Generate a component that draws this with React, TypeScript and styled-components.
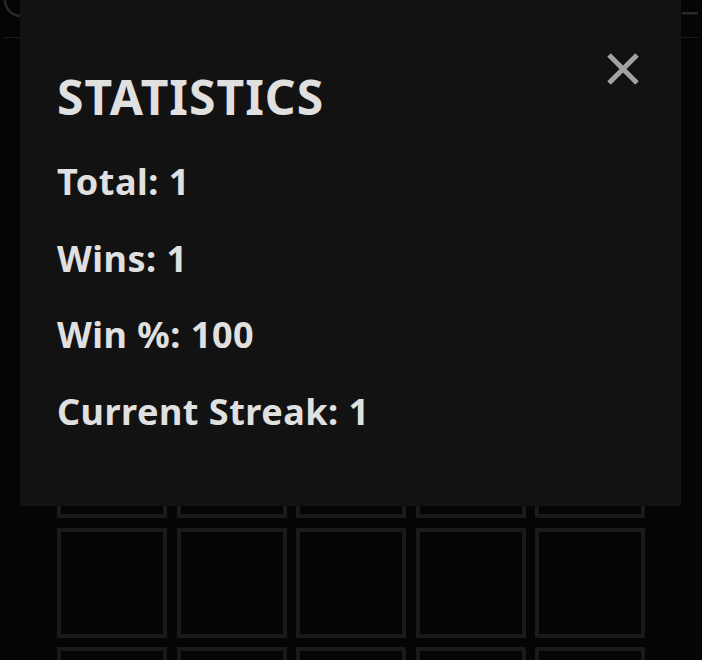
import React from "react";
import styled, { createGlobalStyle } from "styled-components";

const Global = createGlobalStyle`
  html, body { margin: 0; padding: 0; background: #121212; }
  body { font-family: "Noto Sans", "Open Sans", sans-serif; overflow: hidden; }
  #root { width: 702px; height: 660px; }
`;

const Page = styled.div`
  position: relative;
  width: 702px;
  height: 660px;
  background: #121212;
  overflow: hidden;
`;

const Header = styled.header`
  display: flex;
  justify-content: space-between;
  align-items: flex-start;
  height: 37px;
  margin: 0 3px;
  border-bottom: 1px solid #575757;
`;

const HeaderIcon = styled.svg`
  margin-top: -18px;
  color: #8a8a8a;
`;

const Board = styled.div`
  display: grid;
  grid-template-columns: repeat(5, 110px);
  grid-auto-rows: 110px;
  gap: 9.7px 9.5px;
  justify-content: center;
  padding-top: 11px;
`;

const Tile = styled.div`
  box-sizing: border-box;
  border: 4px solid #575757;
  background: #121212;
`;

const Overlay = styled.div`
  position: absolute;
  inset: 0;
  background: rgba(0, 0, 0, 0.7);
`;

const Modal = styled.section`
  position: absolute;
  top: 0;
  left: 20px;
  width: 661px;
  box-sizing: border-box;
  padding: 73px 37px 76px;
  background: #121212;
  color: #e0e0e0;
  display: flex;
  flex-direction: column;
`;

const Title = styled.h2`
  margin: 0 0 43px;
  font-size: 48px;
  line-height: 48px;
  font-weight: 700;
  letter-spacing: 1px;
`;

const StatList = styled.div`
  display: flex;
  flex-direction: column;
  gap: 40.5px;
`;

const Stat = styled.p`
  margin: 0;
  font-size: 36px;
  line-height: 36px;
  font-weight: 700;
  letter-spacing: 0.5px;
`;

const CloseButton = styled.button`
  position: absolute;
  top: 51px;
  right: 40px;
  width: 36px;
  height: 36px;
  padding: 0;
  border: none;
  background: transparent;
  color: #a2a2a2;
  display: flex;
  align-items: center;
  justify-content: center;
`;

const stats = [
  ["Total", "1"],
  ["Wins", "1"],
  ["Win %", "100"],
  ["Current Streak", "1"],
];

export default function App() {
  return (
    <Page>
      <Global />
      <Header>
        <HeaderIcon width="40" height="40" viewBox="0 0 40 40" fill="none">
          <circle cx="18" cy="18" r="16" stroke="currentColor" strokeWidth="2.5" />
        </HeaderIcon>
        <HeaderIcon width="20" height="40" viewBox="0 0 20 40" fill="none">
          <rect x="7" y="14" width="3" height="4" fill="currentColor" />
          <rect x="13" y="14" width="3" height="4" fill="currentColor" />
          <rect x="3" y="30" width="16" height="2.5" fill="currentColor" />
        </HeaderIcon>
      </Header>
      <Board>
        {Array.from({ length: 30 }).map((_, i) => (
          <Tile key={i} />
        ))}
      </Board>
      <Overlay />
      <Modal>
        <CloseButton aria-label="Close">
          <svg width="36" height="36" viewBox="0 0 36 36">
            <path d="M4 4 L32 32 M32 4 L4 32" stroke="currentColor" strokeWidth="5" />
          </svg>
        </CloseButton>
        <Title>STATISTICS</Title>
        <StatList>
          {stats.map(([k, v]) => (
            <Stat key={k}>
              {k}: {v}
            </Stat>
          ))}
        </StatList>
      </Modal>
    </Page>
  );
}
